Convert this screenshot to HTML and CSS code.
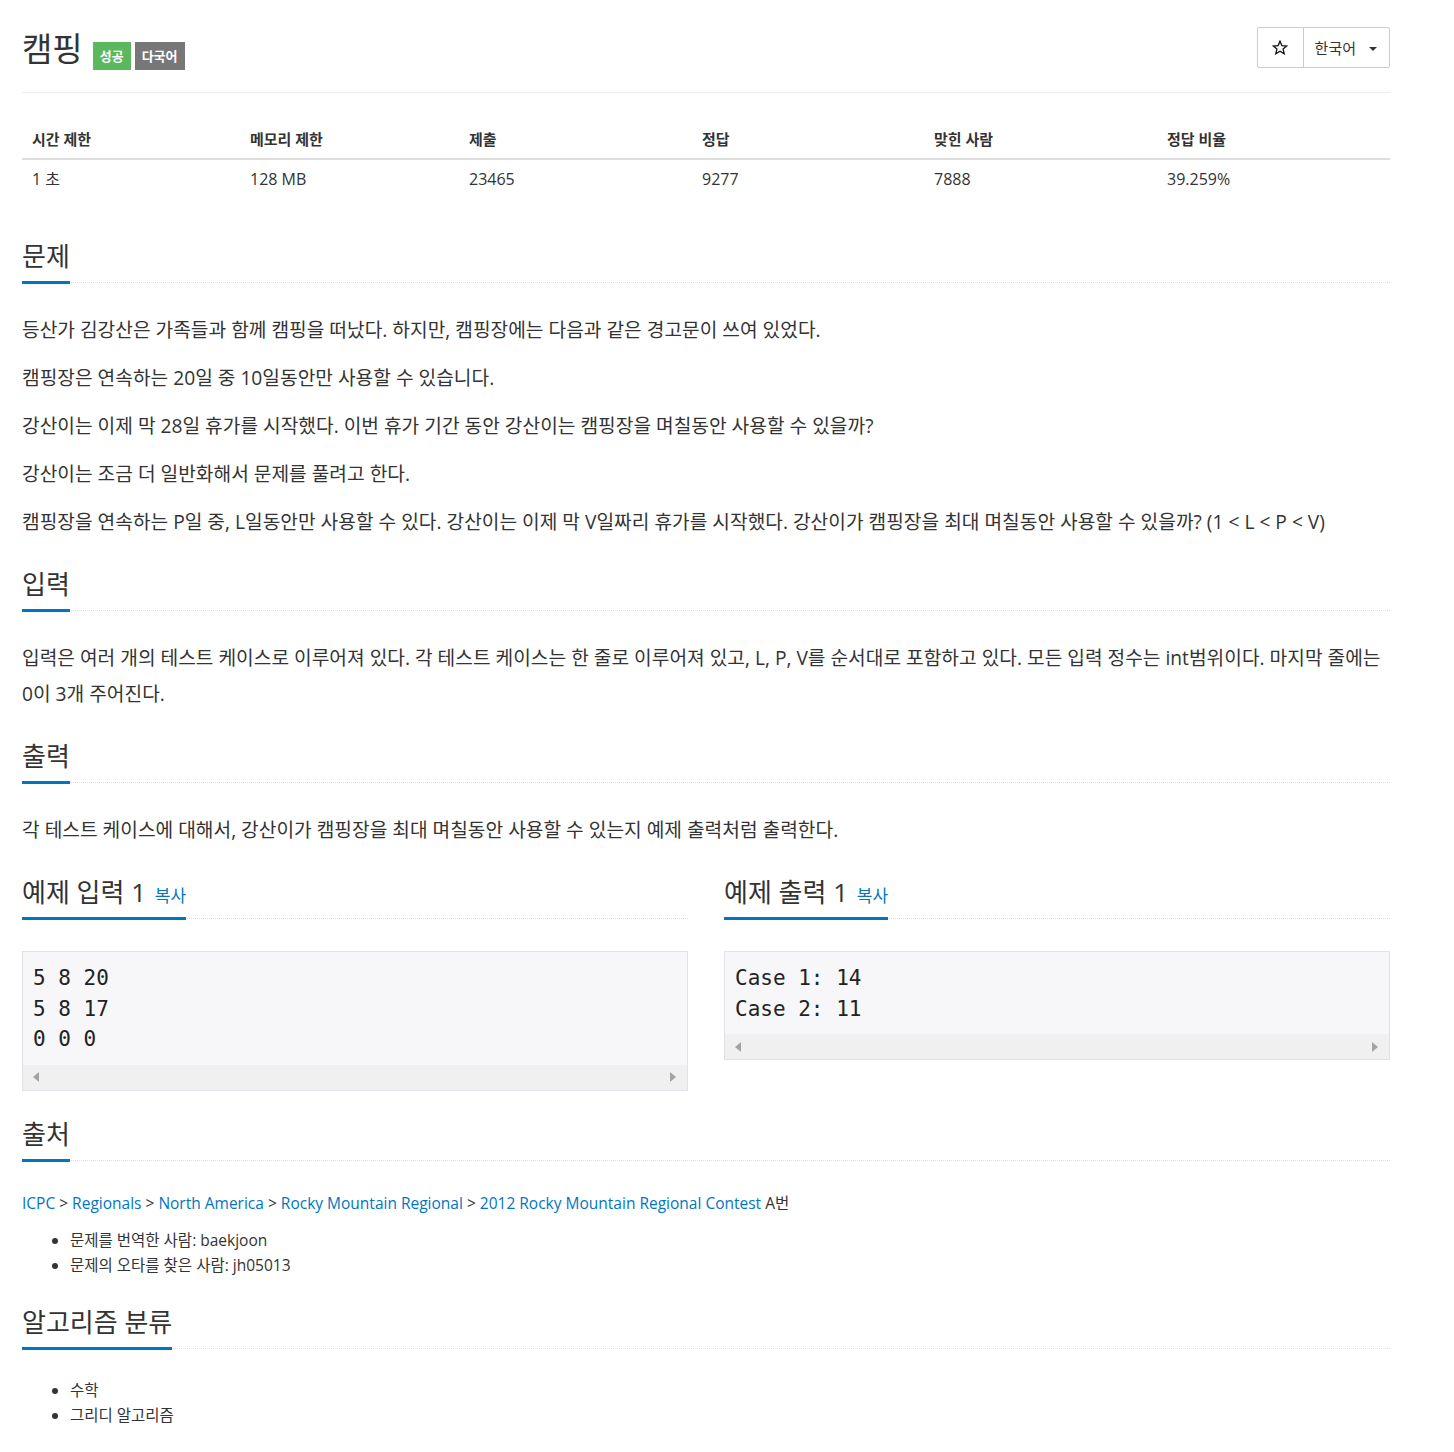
FILE: index.html
```html
<!DOCTYPE html>
<html lang="ko">
<head>
    <meta charset="UTF-8">
    <meta name="viewport" content="width=device-width, initial-scale=1.0">
    <title>캠핑</title>
    <link rel="stylesheet" href="styles.css">
</head>
<body>
    <div class="page">
        <div class="page-header">
            <h1 class="title"><span class="title-text">캠핑</span><span class="badge badge-success">성공</span><span class="badge badge-default">다국어</span></h1>
            <div class="btn-group">
                <span class="btn btn-star">
                    <svg width="16" height="15" viewBox="0 0 16 15"><path d="M8 1.2l1.9 4.4 4.8.4-3.6 3.1 1.1 4.7L8 11.3l-4.2 2.5 1.1-4.7L1.3 6l4.8-.4z" fill="none" stroke="#111" stroke-width="1.3" stroke-linejoin="miter"/></svg>
                </span>
                <span class="btn btn-lang">한국어 <span class="caret"></span></span>
            </div>
        </div>

        <table class="info-table">
            <colgroup>
                <col style="width: 218px">
                <col style="width: 219px">
                <col style="width: 233px">
                <col style="width: 232px">
                <col style="width: 233px">
                <col>
            </colgroup>
            <thead>
                <tr>
                    <th>시간 제한</th>
                    <th>메모리 제한</th>
                    <th>제출</th>
                    <th>정답</th>
                    <th>맞힌 사람</th>
                    <th>정답 비율</th>
                </tr>
            </thead>
            <tbody>
                <tr>
                    <td>1 초</td>
                    <td>128 MB</td>
                    <td>23465</td>
                    <td>9277</td>
                    <td>7888</td>
                    <td>39.259%</td>
                </tr>
            </tbody>
        </table>

        <section class="problem-section">
            <div class="headline"><h2>문제</h2></div>
            <div class="problem-text">
                <p>등산가 김강산은 가족들과 함께 캠핑을 떠났다. 하지만, 캠핑장에는 다음과 같은 경고문이 쓰여 있었다.</p>
                <p>캠핑장은 연속하는 20일 중 10일동안만 사용할 수 있습니다.</p>
                <p>강산이는 이제 막 28일 휴가를 시작했다. 이번 휴가 기간 동안 강산이는 캠핑장을 며칠동안 사용할 수 있을까?</p>
                <p>강산이는 조금 더 일반화해서 문제를 풀려고 한다.</p>
                <p>캠핑장을 연속하는 P일 중, L일동안만 사용할 수 있다. 강산이는 이제 막 V일짜리 휴가를 시작했다. 강산이가 캠핑장을 최대 며칠동안 사용할 수 있을까? (1 &lt; L &lt; P &lt; V)</p>
            </div>
        </section>

        <section class="problem-section">
            <div class="headline"><h2>입력</h2></div>
            <div class="problem-text">
                <p>입력은 여러 개의 테스트 케이스로 이루어져 있다. 각 테스트 케이스는 한 줄로 이루어져 있고, L, P, V를 순서대로 포함하고 있다. 모든 입력 정수는 int범위이다. 마지막 줄에는 0이 3개 주어진다.</p>
            </div>
        </section>

        <section class="problem-section">
            <div class="headline"><h2>출력</h2></div>
            <div class="problem-text">
                <p>각 테스트 케이스에 대해서, 강산이가 캠핑장을 최대 며칠동안 사용할 수 있는지 예제 출력처럼 출력한다.</p>
            </div>
        </section>

        <div class="samples">
            <section class="problem-section sample">
                <div class="headline"><h2>예제 입력 1 <a class="copy" href="#">복사</a></h2></div>
                <div class="sample-box">
                    <pre>5 8 20
5 8 17
0 0 0</pre>
                    <div class="scrollbar"><span class="arrow-left"></span><span class="arrow-right"></span></div>
                </div>
            </section>
            <section class="problem-section sample">
                <div class="headline"><h2>예제 출력 1 <a class="copy" href="#">복사</a></h2></div>
                <div class="sample-box">
                    <pre>Case 1: 14
Case 2: 11</pre>
                    <div class="scrollbar"><span class="arrow-left"></span><span class="arrow-right"></span></div>
                </div>
            </section>
        </div>

        <section class="problem-section">
            <div class="headline"><h2>출처</h2></div>
            <div class="source">
                <p class="breadcrumb"><a href="#">ICPC</a> &gt; <a href="#">Regionals</a> &gt; <a href="#">North America</a> &gt; <a href="#">Rocky Mountain Regional</a> &gt; <a href="#">2012 Rocky Mountain Regional Contest</a> A번</p>
                <ul>
                    <li>문제를 번역한 사람: baekjoon</li>
                    <li>문제의 오타를 찾은 사람: jh05013</li>
                </ul>
            </div>
        </section>

        <section class="problem-section">
            <div class="headline"><h2>알고리즘 분류</h2></div>
            <div class="source tags">
                <ul>
                    <li>수학</li>
                    <li>그리디 알고리즘</li>
                </ul>
            </div>
        </section>
    </div>
</body>
</html>
```

FILE: styles.css
```css
:root {
    --text: #333333;
    --link: #0076c0;
    --border: #dddddd;
    --success: #5cb85c;
    --gray: #777777;
}

body {
    margin: 0;
    font-family: "Open Sans", "Noto Sans CJK KR", sans-serif;
    color: var(--text);
    background: #ffffff;
}

a {
    color: var(--link);
    text-decoration: none;
}

.page {
    width: 1368px;
    margin: 0 22px;
    padding-bottom: 20px;
}

/* header */
.page-header {
    display: flex;
    justify-content: space-between;
    align-items: center;
    padding: 27px 0 24px;
    border-bottom: 1px solid #eeeeee;
}

.title {
    display: flex;
    align-items: flex-end;
    height: 41px;
    margin: 0;
    font-size: 33px;
    font-weight: 400;
}

.title-text {
    line-height: 36px;
    margin-bottom: 1px;
}

.badge {
    display: inline-block;
    margin-bottom: -2px;
    padding: 0 7px;
    font-size: 13px;
    line-height: 28px;
    color: #ffffff;
    font-weight: 700;
}

.badge-success {
    background: var(--success);
    margin-left: 10px;
}

.badge-default {
    background: var(--gray);
    margin-left: 4px;
}

.btn-group {
    display: flex;
    border: 1px solid #cccccc;
    border-radius: 2px;
}

.btn {
    display: flex;
    align-items: center;
    height: 39px;
    font-size: 15px;
    color: #333333;
}

.btn-star {
    width: 45px;
    justify-content: center;
    border-right: 1px solid #cccccc;
}

.btn-lang {
    padding: 0 12px 0 11px;
}

.caret {
    display: inline-block;
    margin-left: 13px;
    margin-top: 3px;
    border-top: 4px solid #333333;
    border-left: 4px solid transparent;
    border-right: 4px solid transparent;
}

/* info table */
.info-table {
    width: 100%;
    margin: 27px 0 43px;
    border-collapse: collapse;
    table-layout: fixed;
    font-size: 16px;
}

.info-table th,
.info-table td {
    text-align: left;
    padding: 8px 10px;
    line-height: 22px;
}

.info-table th {
    font-weight: 700;
    font-size: 15px;
    border-bottom: 2px solid var(--border);
}

/* sections */
.problem-section {
    margin-bottom: 17px;
}

.headline {
    border-bottom: 1px dotted #dddddd;
}

.headline h2 {
    display: inline-block;
    margin: 0 0 -2px;
    padding-bottom: 10px;
    font-size: 26px;
    line-height: 30px;
    font-weight: 400;
    border-bottom: 3px solid var(--link);
}

.problem-text {
    display: flow-root;
    padding-top: 29px;
    font-size: 19.2px;
    line-height: 36px;
    word-break: keep-all;
}

.problem-text p {
    margin: 0 0 12px;
}

/* samples */
.samples {
    display: grid;
    grid-template-columns: 1fr 1fr;
    gap: 36px;
}

.copy {
    font-size: 17px;
    line-height: 1;
    margin-left: 2px;
}

.sample-box {
    margin: 32px 0 11px;
    border: 1px solid #e1e1e8;
    background: #f7f7f9;
}

.sample-box pre {
    margin: 0;
    padding: 11px 10px 10px;
    font-family: "DejaVu Sans Mono", monospace;
    font-size: 21px;
    line-height: 30.5px;
    color: #222222;
}

.scrollbar {
    display: flex;
    justify-content: space-between;
    align-items: center;
    height: 25px;
    padding: 0 11px 0 10px;
    background: #f0f0f0;
}

.arrow-left {
    border-right: 6px solid #a3a3a3;
    border-top: 5px solid transparent;
    border-bottom: 5px solid transparent;
}

.arrow-right {
    border-left: 6px solid #a3a3a3;
    border-top: 5px solid transparent;
    border-bottom: 5px solid transparent;
}

/* source and tags */
.source {
    display: flow-root;
    padding-top: 30px;
    font-size: 15.5px;
    line-height: 25px;
}

.breadcrumb {
    margin: 0 0 12px;
}

.source ul {
    margin: 0 0 12px;
    padding-left: 48px;
}

.tags {
    padding-top: 29px;
}
```
